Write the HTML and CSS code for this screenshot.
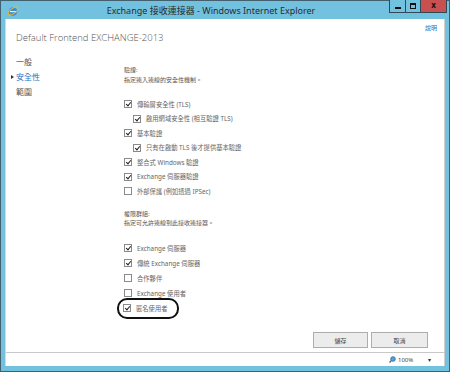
FILE: index.html
```html
<!DOCTYPE html>
<html lang="zh-Hant">

<head>
    <title>Exchange 接收連接器</title>
    <link rel="stylesheet" href="styles.css">
</head>

<body>
    <div class="window">
        <div class="titlebar">
            <svg class="ie-icon" width="12" height="12" viewBox="0 0 12 12">
                <circle cx="6" cy="6.5" r="4.3" fill="#3a8fd6" />
                <rect x="3" y="6" width="6" height="1.2" fill="#d8ecfa" />
                <ellipse cx="6" cy="6" rx="5.6" ry="2.6" transform="rotate(-35 6 6)" fill="none" stroke="#e9b530" stroke-width="1" />
            </svg>
            <div class="title">Exchange 接收連接器 - Windows Internet Explorer</div>
            <div class="win-buttons">
                <span class="wbtn min"><i></i></span>
                <span class="wbtn max"><i></i></span>
                <span class="wbtn close">x</span>
            </div>
        </div>

        <div class="client">
            <div class="page">
                <div class="page-head">
                    <h1>Default Frontend EXCHANGE-2013</h1>
                    <a class="help">說明</a>
                </div>

                <div class="page-body">
                    <ul class="nav">
                        <li>一般</li>
                        <li class="active">安全性</li>
                        <li>範圍</li>
                    </ul>

                    <div class="settings">
                        <div class="group">
                            <div class="group-title">驗證:</div>
                            <div class="group-desc">指定連入連線的安全性機制。</div>
                            <ul class="checks">
                                <li><span class="box on"></span>傳輸層安全性 (TLS)</li>
                                <li class="sub"><span class="box on"></span>啟用網域安全性 (相互驗證 TLS)</li>
                                <li><span class="box on"></span>基本驗證</li>
                                <li class="sub"><span class="box on"></span>只有在啟動 TLS 後才提供基本驗證</li>
                                <li><span class="box on"></span>整合式 Windows 驗證</li>
                                <li><span class="box on"></span>Exchange 伺服器驗證</li>
                                <li><span class="box"></span>外部保護 (例如透過 IPSec)</li>
                            </ul>
                        </div>

                        <div class="group">
                            <div class="group-title">權限群組:</div>
                            <div class="group-desc">指定可允許連線到此接收連接器。</div>
                            <ul class="checks wide">
                                <li><span class="box on"></span>Exchange 伺服器</li>
                                <li><span class="box on"></span>傳統 Exchange 伺服器</li>
                                <li><span class="box"></span>合作夥伴</li>
                                <li><span class="box"></span>Exchange 使用者</li>
                                <li><span class="marked"><span class="box on"></span>匿名使用者</span></li>
                            </ul>
                        </div>
                    </div>
                </div>

                <div class="actions">
                    <button class="save">儲存</button>
                    <button class="cancel">取消</button>
                </div>
            </div>

            <div class="statusbar">
                <svg class="zoom-icon" width="7" height="7" viewBox="0 0 7 7">
                    <circle cx="4" cy="3" r="2.3" fill="#5aa0e0" stroke="#2a64a8" stroke-width="0.8" />
                    <line x1="2.3" y1="4.7" x2="0.5" y2="6.5" stroke="#555" stroke-width="1.2" />
                </svg>
                <span class="zoom-level">100%</span>
                <span class="zoom-arrow">▾</span>
                <span class="grip"></span>
            </div>
        </div>
    </div>
</body>

</html>
```

FILE: styles.css
```css
:root {
    --frame: #72c1df;
    --frame-border: #43606e;
    --text: #555;
    --link: #1f73c4;
    --ui-font: "Noto Sans", "Liberation Sans", "Noto Sans CJK TC", sans-serif;
}

body {
    margin: 0;
    padding: 0;
    background: #fff;
    font-family: var(--ui-font);
    color: var(--text);
}

ul {
    list-style: none;
    margin: 0;
    padding: 0;
}

.window {
    width: 450px;
    height: 372px;
    box-sizing: border-box;
    border: 1px solid var(--frame-border);
    background: var(--frame);
    padding: 0 4px 5px 4px;
    display: flex;
    flex-direction: column;
}

.titlebar {
    height: 18px;
    display: flex;
    align-items: center;
}

.ie-icon {
    margin-left: 2px;
    margin-top: 1px;
}

.title {
    flex: 1;
    text-align: center;
    font-size: 9px;
    color: #2c2c2c;
    padding-left: 14px;
}

.win-buttons {
    display: flex;
    align-self: flex-start;
    margin-right: -2px;
    margin-top: -1px;
}

.wbtn {
    height: 13px;
    box-sizing: border-box;
    border: 1px solid #2e4a58;
    border-top: none;
    display: flex;
    align-items: center;
    justify-content: center;
    background: var(--frame);
}

.wbtn + .wbtn {
    border-left: none;
}

.wbtn.min {
    width: 17px;
}

.wbtn.min i {
    width: 6px;
    height: 2px;
    background: #111;
    margin-top: 3px;
}

.wbtn.max {
    width: 15px;
}

.wbtn.max i {
    width: 4px;
    height: 3px;
    border: 1px solid #111;
    border-top-width: 2px;
}

.wbtn.close {
    width: 26px;
    background: #c75050;
    color: #111;
    font-size: 8px;
    font-weight: bold;
    line-height: 1;
    padding-bottom: 2px;
}

.client {
    flex: 1;
    display: flex;
    flex-direction: column;
    background: #fff;
    border-left: 1px solid #b7e3f3;
    border-right: 1px solid #d0d0d0;
}

.page {
    flex: 1;
    display: flex;
    flex-direction: column;
}

.page-head {
    display: flex;
    justify-content: space-between;
    padding: 4px 7px 0 10px;
}

.page-head h1 {
    margin: 9px 0 0 0;
    font-family: "Open Sans", "Noto Sans", sans-serif;
    font-size: 9.5px;
    line-height: 12px;
    font-weight: 300;
    color: #555;
}

.help {
    font-size: 6px;
    line-height: 10px;
    color: var(--link);
}

.page-body {
    display: flex;
    margin-top: 10px;
}

.nav {
    width: 113px;
    padding-left: 5px;
    font-size: 8px;
    line-height: 15px;
    color: #555;
}

.nav li {
    padding-left: 5px;
}

.nav li.active {
    color: var(--link);
    padding-left: 0;
}

.nav li.active::before {
    content: "";
    display: inline-block;
    width: 0;
    height: 0;
    border-left: 3px solid #333;
    border-top: 2px solid transparent;
    border-bottom: 2px solid transparent;
    margin-right: 2px;
    vertical-align: 1px;
}

.settings {
    padding-top: 12px;
    font-size: 6px;
}

.group-title,
.group-desc {
    line-height: 9.5px;
    color: #555;
}

.group + .group {
    margin-top: 11px;
}

.checks {
    margin-top: 12px;
}

.checks li {
    height: 14.5px;
    display: flex;
    align-items: center;
    color: #666;
    font-size: 6.3px;
}

.checks.wide li {
    height: 15px;
}

.checks li.sub {
    padding-left: 9px;
}

.box {
    width: 8px;
    height: 8px;
    box-sizing: border-box;
    border: 1px solid #8a8a8a;
    margin-right: 5px;
    position: relative;
    flex: none;
}

.box.on::after {
    content: "";
    position: absolute;
    left: 2px;
    top: 0px;
    width: 2px;
    height: 4px;
    border: solid #222;
    border-width: 0 1.2px 1.2px 0;
    transform: rotate(40deg);
}

.marked {
    display: inline-flex;
    align-items: center;
    border: 2px solid #111;
    border-radius: 10px;
    padding: 4px 10px 4px 4px;
    margin-left: -7px;
}

.actions {
    margin-top: auto;
    display: flex;
    justify-content: flex-end;
    gap: 3px;
    padding: 0 16px 4px 0;
}

.actions button {
    height: 16px;
    font-family: var(--ui-font);
    font-size: 6px;
    color: #444;
    background: #ececec;
    border: 1px solid #adadad;
    padding: 0;
}

.actions .save {
    width: 55px;
}

.actions .cancel {
    width: 57px;
}

.statusbar {
    height: 13px;
    border-top: 1px solid #c8c8c8;
    display: flex;
    align-items: center;
    justify-content: flex-end;
    font-size: 6px;
    color: #444;
    padding-right: 2px;
}

.zoom-icon {
    margin-right: 2px;
}

.zoom-level {
    width: 30px;
}

.zoom-arrow {
    width: 10px;
    font-size: 6px;
    color: #333;
}

.grip {
    width: 4px;
    height: 4px;
    align-self: flex-end;
    margin-bottom: 1px;
    background: radial-gradient(circle, #999 0.6px, transparent 0.7px) 0 0 / 2px 2px;
}
```
